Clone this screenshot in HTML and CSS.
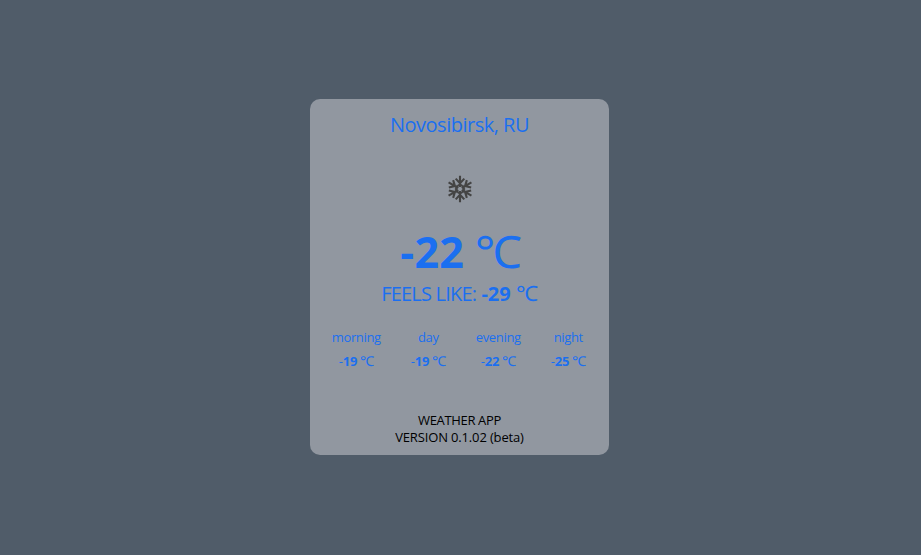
FILE: index.html
```html
<!DOCTYPE html>
<html lang="en">
<head>
<meta charset="utf-8">
<title>Weather App</title>
<link rel="stylesheet" href="styles.css">
</head>
<body>
<main class="card">
  <h1 class="city">Novosibirsk, RU</h1>
  <svg class="icon" viewBox="0 0 28 28" aria-hidden="true">
    <defs><g id="arm"><path d="M14 12V.8M14 8.2L9.7 3.6M14 8.2L18.3 3.6M11.8 10.2H16.2"/></g></defs>
    <use href="#arm"/><use href="#arm" transform="rotate(60 14 14)"/><use href="#arm" transform="rotate(120 14 14)"/><use href="#arm" transform="rotate(180 14 14)"/><use href="#arm" transform="rotate(240 14 14)"/><use href="#arm" transform="rotate(300 14 14)"/>
  </svg>
  <p class="temp"><b>-22</b> <span class="unit">℃</span></p>
  <p class="feels"><span class="label">FEELS LIKE:</span> <b>-29</b> <span class="unit">℃</span></p>
  <section class="parts">
    <div class="part"><span class="name">morning</span><span class="value">-<b>19</b> <span class="unit">℃</span></span></div>
    <div class="part"><span class="name">day</span><span class="value">-<b>19</b> <span class="unit">℃</span></span></div>
    <div class="part"><span class="name">evening</span><span class="value">-<b>22</b> <span class="unit">℃</span></span></div>
    <div class="part"><span class="name">night</span><span class="value">-<b>25</b> <span class="unit">℃</span></span></div>
  </section>
  <footer class="footer"><span class="app">WEATHER APP</span><br>VERSION 0.1.02 (beta)</footer>
</main>
</body>
</html>
```
FILE: styles.css
```css
* { box-sizing: border-box; margin: 0; padding: 0; }
body { height: 555px; padding: 99px 0 0 310px; background: #505c69; font-family: "Open Sans", "Noto Sans", sans-serif; color: #1b6ff0; overflow: hidden; }
.card { width: 299px; height: 356px; border-radius: 10px; background: #9197a0; display: flex; flex-direction: column; align-items: center; }
.city { font-size: 20px; font-weight: 400; line-height: 28px; margin-top: 12px; letter-spacing: -0.5px; }
.icon { width: 28px; height: 28px; margin: 36px 0 0 0; fill: none; stroke: #444; stroke-width: 2.1; }
.temp { font-size: 43px; line-height: 60px; margin: 19px 0 0 1px; white-space: nowrap; }
.unit { display: inline-block; line-height: 1; transform: scaleX(1.06); transform-origin: left; }
.temp b { letter-spacing: 0.3px; }
.temp .unit { font-size: 44.5px; }
.feels { font-size: 20px; line-height: 26px; margin: -1px 1px 0 0; white-space: nowrap; }
.feels .label { letter-spacing: -0.8px; }
.feels .unit { font-size: 21px; }
.parts { display: grid; grid-template-columns: 49px 38px 45px 38px; font-size: 13px; line-height: 24px; margin-top: 18px; column-gap: 28.5px; }
.part { display: flex; flex-direction: column; align-items: center; white-space: nowrap; }
.name { letter-spacing: -0.35px; }
.value { letter-spacing: -0.2px; }
.value .unit { font-size: 13.5px; }
.footer { color: #000; font-size: 13px; line-height: 17px; letter-spacing: -0.15px; text-align: center; margin-top: 39px; }
.app { letter-spacing: -0.35px; }
```
